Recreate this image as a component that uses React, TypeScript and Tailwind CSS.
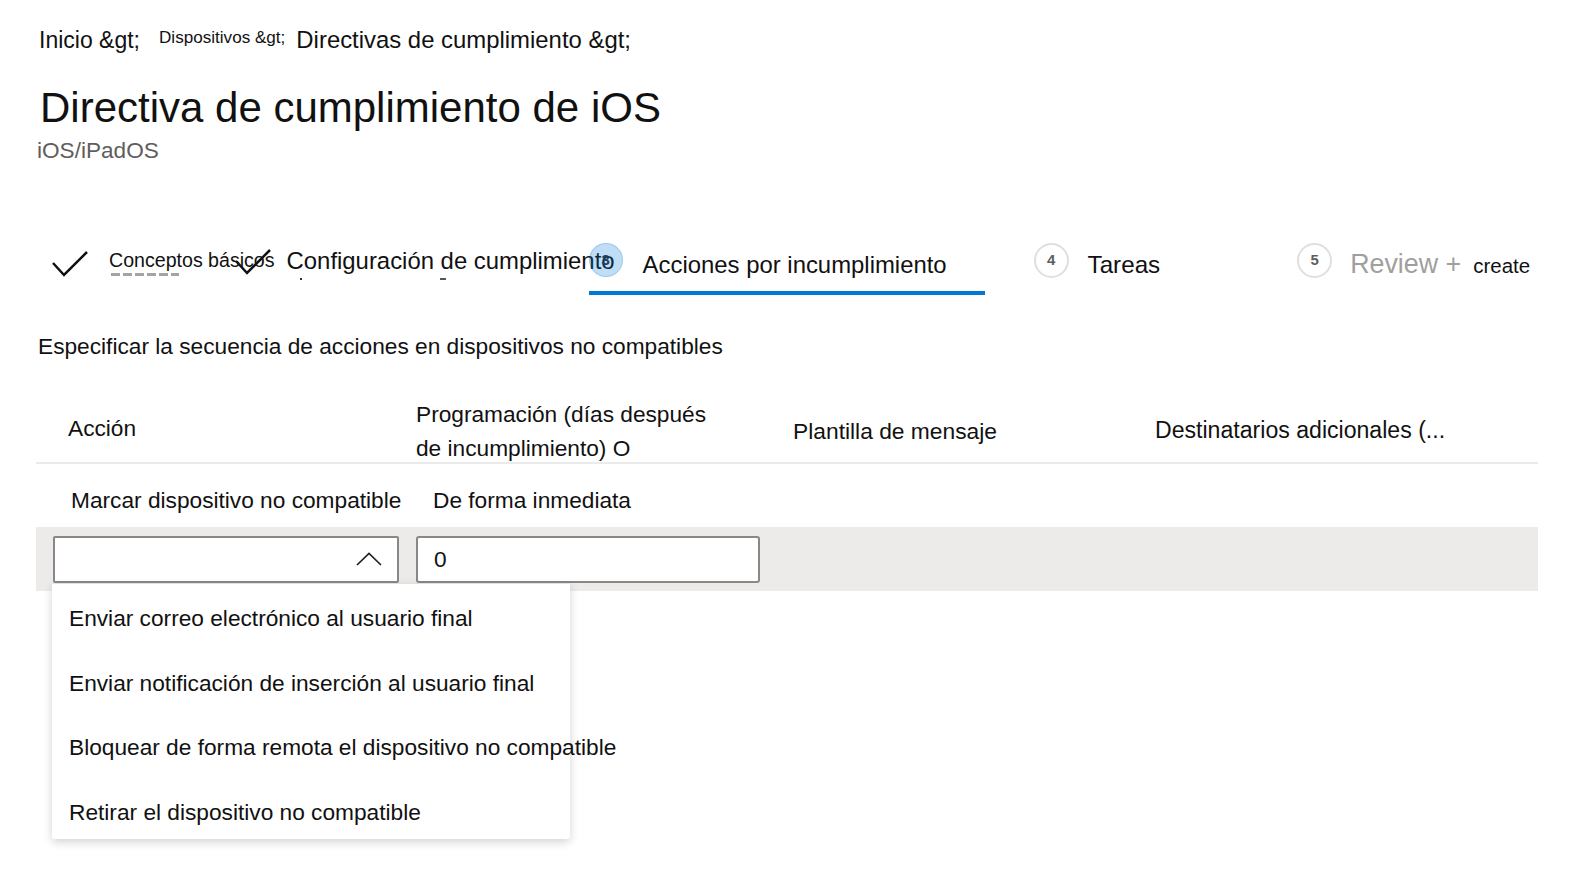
const font = { fontFamily: '"Liberation Sans", Arial, sans-serif' };

function Check({ className }: { className?: string }) {
  return (
    <svg viewBox="0 0 36 26" className={className} fill="none" stroke="#111" strokeWidth={2.5}>
      <path d="M1 12 L12 24 L35 1" />
    </svg>
  );
}

function StepCircle({ n, active }: { n: string; active?: boolean }) {
  return active ? (
    <div className="w-[34px] h-[34px] rounded-full bg-[#0078d4]/25 border border-[#0078d4]/20 flex items-center justify-center text-[15px] font-bold text-[#1b3d63] shrink-0">
      {n}
    </div>
  ) : (
    <div className="w-[35px] h-[35px] rounded-full border-2 border-[#e1dfdd] flex items-center justify-center text-[15px] font-bold text-[#605e5c] shrink-0">
      {n}
    </div>
  );
}

const options = [
  "Enviar correo electrónico al usuario final",
  "Enviar notificación de inserción al usuario final",
  "Bloquear de forma remota el dispositivo no compatible",
];

export default function App() {
  return (
    <div className="w-[1592px] h-[892px] bg-white text-[#111] overflow-hidden" style={font}>
      {/* breadcrumbs */}
      <div className="flex items-baseline pl-[39px] pt-[26px] leading-[28px]">
        <span className="text-[23px]">Inicio &amp;gt;</span>
        <span className="ml-[19px] text-[17.1px] relative -top-[5px]">Dispositivos &amp;gt;</span>
        <span className="ml-[11px] text-[23.9px]">Directivas de cumplimiento &amp;gt;</span>
      </div>

      <h1 className="pl-[40px] mt-[27px] text-[42px] leading-[48px]">Directiva de cumplimiento de iOS</h1>
      <div className="pl-[37px] mt-[6px] text-[22.6px] leading-[26px] text-[#605e5c]">iOS/iPadOS</div>

      {/* wizard steps */}
      <div className="mt-[72px] flex items-start h-[60px]">
        <div className="flex items-center pl-[52px] pt-[13px]">
          <Check className="w-[36px] h-[26px]" />
          <div className="ml-[21px] relative h-[30px]">
            <span className="text-[19.6px] leading-[22px] block">Conceptos básicos</span>
            <div className="absolute left-[2px] top-[24px] w-[68px] h-[3px] bg-[repeating-linear-gradient(90deg,#666_0_9px,transparent_9px_12px)] opacity-60" />
          </div>
          <Check className="w-[40px] h-[26px] -ml-[42px] -mt-[4px]" />
          <div className="ml-[14px] -mt-[7px] relative">
            <span className="text-[23.9px] leading-[28px] block">Configuración de cumplimiento</span>
            <div className="absolute left-[13px] top-[31px] w-[2px] h-[2px] bg-[#333]" />
            <div className="absolute left-[153px] top-[31px] w-[6px] h-[2px] bg-[#555]" />
          </div>
        </div>
        <div className="relative -ml-[26px] pt-[5px] w-[396px] h-[58px]">
          <div className="flex items-center">
            <StepCircle n="3" active />
            <span className="ml-[20px] mt-[10px] text-[23.9px] leading-[28px]">Acciones por incumplimiento</span>
          </div>
          <div className="absolute left-0 right-0 bottom-[-1px] h-[4px] bg-[#0078d4]" />
        </div>
        <div className="flex items-center ml-[49px] pt-[5px]">
          <StepCircle n="4" />
          <span className="ml-[19px] mt-[10px] text-[24.2px] leading-[28px]">Tareas</span>
        </div>
        <div className="flex items-center ml-[137px] pt-[5px]">
          <StepCircle n="5" />
          <span className="ml-[18px] mt-[7px] text-[26.8px] leading-[28px] text-[#a19f9d]">Review +</span>
          <span className="ml-[12px] mt-[11px] text-[20.5px] leading-[28px]">create</span>
        </div>
      </div>

      <div className="pl-[38px] mt-[35px] text-[22.7px] leading-[30px]">
        Especificar la secuencia de acciones en dispositivos no compatibles
      </div>

      {/* table */}
      <div className="ml-[36px] w-[1502px] mt-[33px] text-[22.7px]">
        <div className="flex items-center h-[70px] border-b-2 border-[#ebebeb] leading-[33.5px]">
          <div className="w-[380px] pl-[32px] pt-[2px]">Acción</div>
          <div className="w-[377px] pt-[7px]">
            Programación (días después
            <br />
            de incumplimiento) O
          </div>
          <div className="w-[362px] pt-[8px] text-[22.8px]">Plantilla de mensaje</div>
          <div className="pt-[6px] text-[23.1px]">Destinatarios adicionales (...</div>
        </div>
        <div className="flex items-start h-[63px] pt-[21px] leading-[30px]">
          <div className="pl-[35px] w-[397px]">Marcar dispositivo no compatible</div>
          <div>De forma inmediata</div>
        </div>
        <div className="relative bg-[#edebe9] h-[64px] flex items-center gap-[17px] pl-[17px]">
          <div className="w-[346px] h-[47px] bg-white border-2 border-[#8a8886] rounded-[2px] flex items-center justify-end pr-[15px]">
            <svg viewBox="0 0 26 14" className="w-[26px] h-[14px]" fill="none" stroke="#222" strokeWidth={1.7}>
              <polyline points="1,13 13,1.5 25,13" />
            </svg>
          </div>
          <div className="w-[344px] h-[47px] bg-white border-2 border-[#8a8886] rounded-[3px] flex items-center pl-[16px]">
            0
          </div>

          {/* dropdown list */}
          <div className="absolute left-[16px] top-[57px] w-[518px] bg-white shadow-[0_3px_10px_rgba(0,0,0,0.18)] rounded-b-[3px] pt-[2px] z-10">
            {options.map((o) => (
              <div key={o} className="pl-[17px] h-[64.5px] flex items-center leading-[30px] whitespace-nowrap">
                {o}
              </div>
            ))}
            <div className="pl-[17px] h-[59px] pt-[6px] flex items-center leading-[30px] whitespace-nowrap">
              Retirar el dispositivo no compatible
            </div>
          </div>
        </div>
      </div>
    </div>
  );
}
